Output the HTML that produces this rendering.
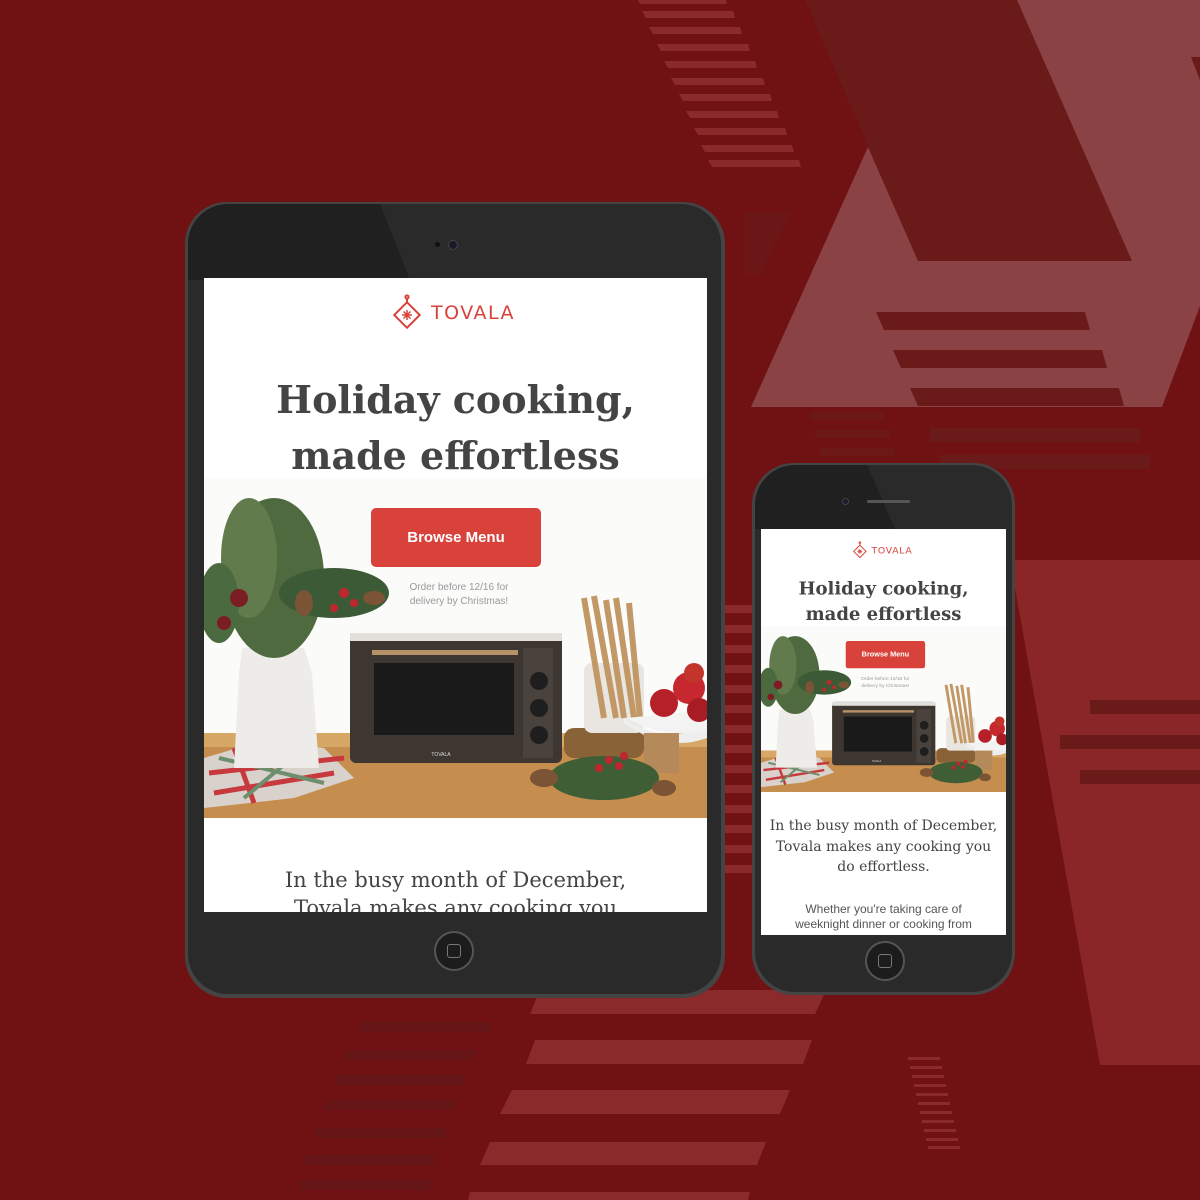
<!DOCTYPE html>
<html><head><meta charset="utf-8"><style>
*{margin:0;padding:0;box-sizing:border-box}
body{width:1200px;height:1200px;overflow:hidden;background:#701214;position:relative;font-family:"Liberation Sans",sans-serif}
.abs{position:absolute}
.serif{font-family:"DejaVu Serif","Liberation Serif",serif;color:#444;text-align:center}
.screen{position:absolute;background:#fff;overflow:hidden}
.btn{position:absolute;background:#d9423a;border-radius:5px;color:#fff;font-weight:bold;text-align:center}
</style></head><body>

<svg class="abs" style="left:0;top:0" width="1200" height="1200">
 <polygon points="805,0 1017,0 1132,261 918,261" fill="#6a1a18"/>
 <polygon points="1017,0 1200,0 1200,306 1162,407 751,407 868,147 918,261 1132,261" fill="#8a4244"/>
 <polygon points="1191,57 1200,57 1200,80" fill="#6a1a18"/>
 <polygon points="876,312 1085,312 1090,330 884,330" fill="#6a1a18"/>
 <polygon points="893,350 1102,350 1107,368 901,368" fill="#6a1a18"/>
 <polygon points="910,388 1119,388 1124,406 918,406" fill="#6a1a18"/>
 <polygon points="1010,560 1200,560 1200,1065 1100,1065" fill="#8a2628"/>
 <g fill="#6a1a18">
  <rect x="930" y="428" width="210" height="14"/><rect x="940" y="455" width="210" height="14"/>
  <rect x="1090" y="700" width="110" height="14"/><rect x="1060" y="735" width="140" height="14"/><rect x="1080" y="770" width="120" height="14"/>
 </g>
 <g fill="#6a1a18" opacity=".8">
  <rect x="810" y="412" width="75" height="8"/><rect x="815" y="430" width="75" height="8"/><rect x="820" y="448" width="75" height="8"/><rect x="825" y="466" width="75" height="8"/>
 </g>
 <g fill="#8b2a2b">
  <polygon points="638,0 726,0 727,4 640,4"/>
  <polygon points="642,11 733,11 735,18 646,18"/>
  <polygon points="649,27 740,27 742,34 653,34"/>
  <polygon points="657,44 748,44 750,51 661,51"/>
  <polygon points="664,61 755,61 757,68 668,68"/>
  <polygon points="671,78 763,78 765,85 675,85"/>
  <polygon points="679,94 770,94 772,101 683,101"/>
  <polygon points="686,111 777,111 779,118 690,118"/>
  <polygon points="694,128 785,128 787,135 698,135"/>
  <polygon points="701,145 792,145 794,152 705,152"/>
  <polygon points="708,160 799,160 801,167 712,167"/>
 </g>
 <polygon points="745,212 790,212 760,274 745,274" fill="#6a1a18" opacity=".7"/>
 <g fill="#8b2a2b">
  <polygon points="540,990 826,990 815,1014 530,1014"/>
  <polygon points="535,1040 812,1040 803,1064 526,1064"/>
  <polygon points="512,1090 790,1090 780,1114 500,1114"/>
  <polygon points="490,1142 766,1142 757,1165 480,1165"/>
  <polygon points="470,1192 750,1192 748,1200 468,1200"/>
 </g>
 <g fill="#661617">
  <rect x="360" y="1022" width="130" height="10"/><rect x="345" y="1050" width="130" height="10"/><rect x="335" y="1075" width="130" height="10"/>
  <rect x="325" y="1100" width="130" height="10"/><rect x="315" y="1128" width="130" height="10"/><rect x="305" y="1155" width="130" height="10"/><rect x="300" y="1180" width="130" height="10"/>
 </g>
 <g fill="#8b2a2b">
  <rect x="725" y="605" width="27" height="8"/><rect x="725" y="625" width="27" height="8"/><rect x="725" y="645" width="27" height="8"/><rect x="725" y="665" width="27" height="8"/>
  <rect x="725" y="685" width="27" height="8"/><rect x="725" y="705" width="27" height="8"/><rect x="725" y="725" width="27" height="8"/><rect x="725" y="745" width="27" height="8"/>
  <rect x="725" y="765" width="27" height="8"/><rect x="725" y="785" width="27" height="8"/><rect x="725" y="805" width="27" height="8"/><rect x="725" y="825" width="27" height="8"/>
  <rect x="725" y="845" width="27" height="8"/><rect x="725" y="865" width="27" height="8"/>
 </g>
 <g fill="#8b2a2b">
  <rect x="908" y="1057" width="32" height="3"/><rect x="910" y="1066" width="32" height="3"/><rect x="912" y="1075" width="32" height="3"/><rect x="914" y="1084" width="32" height="3"/>
  <rect x="916" y="1093" width="32" height="3"/><rect x="918" y="1102" width="32" height="3"/><rect x="920" y="1111" width="32" height="3"/><rect x="922" y="1120" width="32" height="3"/>
  <rect x="924" y="1129" width="32" height="3"/><rect x="926" y="1138" width="32" height="3"/><rect x="928" y="1146" width="32" height="3"/>
 </g>
</svg>

<svg width="0" height="0" style="position:absolute">
 <defs>
  <g id="scene">
   <rect x="0" y="200" width="503" height="340" fill="#fbfbfa"/>
   <rect x="0" y="455" width="503" height="85" fill="#c58e4e"/>
   <rect x="0" y="455" width="503" height="14" fill="#d7a766"/>
   <polygon points="0,480 60,462 120,470 150,500 90,520 0,530" fill="#d9d2cc"/>
   <path d="M5,495 L140,480 M10,515 L130,495 M30,470 L50,525" stroke="#c7393d" stroke-width="5"/>
   <path d="M15,480 L120,505 M40,520 L100,470" stroke="#6d8f6d" stroke-width="4"/>
   <path d="M38,370 L100,370 L108,395 L115,490 L30,490 L35,395 Z" fill="#eeece8"/>
   <ellipse cx="70" cy="300" rx="50" ry="80" fill="#4e6a3e"/>
   <ellipse cx="45" cy="280" rx="28" ry="60" fill="#617b4c"/>
   <ellipse cx="130" cy="315" rx="55" ry="25" fill="#3d5a36"/>
   <ellipse cx="15" cy="325" rx="20" ry="40" fill="#4b6a3f"/>
   <circle cx="35" cy="320" r="9" fill="#7a1e24"/><circle cx="20" cy="345" r="7" fill="#7a1e24"/><circle cx="140" cy="315" r="5" fill="#c0262d"/><circle cx="150" cy="325" r="4" fill="#c0262d"/><circle cx="130" cy="330" r="4" fill="#c0262d"/>
   <ellipse cx="100" cy="325" rx="9" ry="13" fill="#7a5434"/><ellipse cx="170" cy="320" rx="11" ry="7" fill="#7a5434"/>
   <rect x="146" y="355" width="212" height="130" rx="6" fill="#3d3631"/>
   <rect x="146" y="355" width="212" height="8" fill="#e2dfda"/>
   <rect x="168" y="372" width="146" height="5" fill="#b59268"/>
   <rect x="170" y="385" width="140" height="72" fill="#1a1a1a"/>
   <rect x="319" y="370" width="30" height="110" fill="#4a423c"/>
   <circle cx="335" cy="403" r="9" fill="#1e1e1e"/><circle cx="335" cy="430" r="9" fill="#1e1e1e"/><circle cx="335" cy="457" r="9" fill="#1e1e1e"/>
   <text x="237" y="478" font-size="5" fill="#ddd" text-anchor="middle">TOVALA</text>
   <rect x="360" y="450" width="80" height="30" rx="10" fill="#8a6238"/>
   <rect x="380" y="385" width="60" height="70" rx="8" fill="#e9e6e1"/>
   <path d="M380,320 L400,440 M390,318 L412,440 M402,322 L420,440 M412,320 L430,440 M425,325 L436,440" stroke="#c29866" stroke-width="6"/>
   <path d="M420,440 Q465,470 503,445 L503,460 Q462,475 420,445Z" fill="#eee"/>
   <rect x="440" y="455" width="35" height="40" fill="#b48a5a"/>
   <path d="M422,440 L503,432 L503,452 Q460,462 422,440Z" fill="#f3f3f3"/>
   <circle cx="460" cy="425" r="14" fill="#b62028"/><circle cx="485" cy="410" r="16" fill="#c7282f"/><circle cx="495" cy="432" r="12" fill="#a81d24"/><circle cx="490" cy="395" r="10" fill="#c3342d"/>
   <ellipse cx="400" cy="500" rx="55" ry="22" fill="#3f5e35"/>
   <circle cx="405" cy="482" r="4" fill="#c0262d"/><circle cx="415" cy="488" r="4" fill="#c0262d"/><circle cx="395" cy="490" r="4" fill="#c0262d"/><circle cx="420" cy="478" r="4" fill="#c0262d"/>
   <ellipse cx="340" cy="500" rx="14" ry="9" fill="#7a5434"/><ellipse cx="460" cy="510" rx="12" ry="8" fill="#7a5434"/>
  </g>
  <g id="logo">
   <g fill="none" stroke="#d9423a" stroke-width="2">
    <rect x="-9" y="-9" width="18" height="18" transform="rotate(45)"/>
    <path d="M0,-13 L0,-17"/><circle cx="0" cy="-18" r="1.6"/>
    <path d="M-5,0 L5,0 M0,-5 L0,5 M-3.5,-3.5 L3.5,3.5 M-3.5,3.5 L3.5,-3.5" stroke-width="1.5"/>
   </g>
  </g>
 </defs>
</svg>

<!-- TABLET -->
<div class="abs" style="left:185px;top:202px;width:540px;height:796px;border-radius:42px;background:#444;"></div>
<div class="abs" style="left:188px;top:204px;width:533px;height:790px;border-radius:40px;background:#2a2a2a;overflow:hidden">
 <svg class="abs" style="left:0;top:0" width="533" height="790"><polygon points="0,0 192,0 222,76 0,76" fill="#202020"/></svg>
</div>
<div class="abs" style="left:435px;top:242px;width:5px;height:5px;border-radius:50%;background:#111"></div>
<div class="abs" style="left:448px;top:240px;width:10px;height:10px;border-radius:50%;background:#1a1a2a;border:1px solid #444"></div>
<div class="abs" style="left:434px;top:931px;width:40px;height:40px;border-radius:50%;background:#1c1c1c;border:2px solid #555"></div>
<div class="abs" style="left:447px;top:944px;width:14px;height:14px;border-radius:3px;border:1.5px solid #777"></div>

<div class="screen" style="left:204px;top:278px;width:503px;height:634px">
 <div class="abs" style="left:0;top:0;width:503px;height:540px">
  <svg class="abs" style="left:0;top:0" width="503" height="540"><use href="#scene"/><g transform="translate(203,37)"><use href="#logo"/></g></svg>
  <div class="abs" style="left:227px;top:24px;font-family:'DejaVu Sans',sans-serif;font-size:19px;color:#d9423a;letter-spacing:1.5px">TOVALA</div>
  <div class="abs serif" style="left:0;top:94px;width:503px;font-size:38px;line-height:56px;font-weight:bold">Holiday cooking,<br>made effortless</div>
  <div class="btn" style="left:167px;top:230px;width:170px;height:59px;line-height:59px;font-size:15px">Browse Menu</div>
  <div class="abs" style="left:190px;top:303px;width:130px;font-size:10px;line-height:14px;color:#999;text-align:center">Order before 12/16 for<br>delivery by Christmas!</div>
 </div>
 <div class="abs serif" style="left:0;top:588px;width:503px;font-size:21px;line-height:28px">In the busy month of December,<br>Tovala makes any cooking you</div>
</div>

<!-- PHONE -->
<div class="abs" style="left:752px;top:463px;width:263px;height:532px;border-radius:42px;background:#444;"></div>
<div class="abs" style="left:755px;top:465px;width:257px;height:527px;border-radius:40px;background:#2a2a2a;overflow:hidden">
 <svg class="abs" style="left:0;top:0" width="257" height="527"><polygon points="0,0 112,0 140,64 0,64" fill="#202020"/></svg>
</div>
<div class="abs" style="left:842px;top:498px;width:7px;height:7px;border-radius:50%;background:#1a1a2a;border:1px solid #444"></div>
<div class="abs" style="left:867px;top:500px;width:43px;height:3px;border-radius:2px;background:#555"></div>
<div class="abs" style="left:865px;top:941px;width:40px;height:40px;border-radius:50%;background:#1c1c1c;border:2px solid #555"></div>
<div class="abs" style="left:878px;top:954px;width:14px;height:14px;border-radius:3px;border:1.5px solid #777"></div>

<div class="screen" style="left:761px;top:529px;width:245px;height:406px">
 <div class="abs" style="left:0;top:0;width:503px;height:540px;transform:scale(0.487);transform-origin:0 0">
  <svg class="abs" style="left:0;top:0" width="503" height="540"><use href="#scene"/><g transform="translate(203,46)"><use href="#logo"/></g></svg>
  <div class="abs" style="left:227px;top:33px;font-family:'DejaVu Sans',sans-serif;font-size:19px;color:#d9423a;letter-spacing:1.5px">TOVALA</div>
  <div class="abs serif" style="left:0;top:96px;width:503px;font-size:37px;line-height:52px;font-weight:bold">Holiday cooking,<br>made effortless</div>
  <div class="btn" style="left:174px;top:230px;width:163px;height:56px;line-height:56px;font-size:15px">Browse Menu</div>
  <div class="abs" style="left:190px;top:301px;width:130px;font-size:10px;line-height:14px;color:#999;text-align:center">Order before 12/16 for<br>delivery by Christmas!</div>
 </div>
 <div class="abs serif" style="left:0;top:287px;width:245px;font-size:14px;line-height:20.5px">In the busy month of December,<br>Tovala makes any cooking you<br>do effortless.</div>
 <div class="abs" style="left:0;top:373px;width:245px;font-size:12px;line-height:15px;color:#555;text-align:center">Whether you're taking care of<br>weeknight dinner or cooking from</div>
</div>

</body></html>
